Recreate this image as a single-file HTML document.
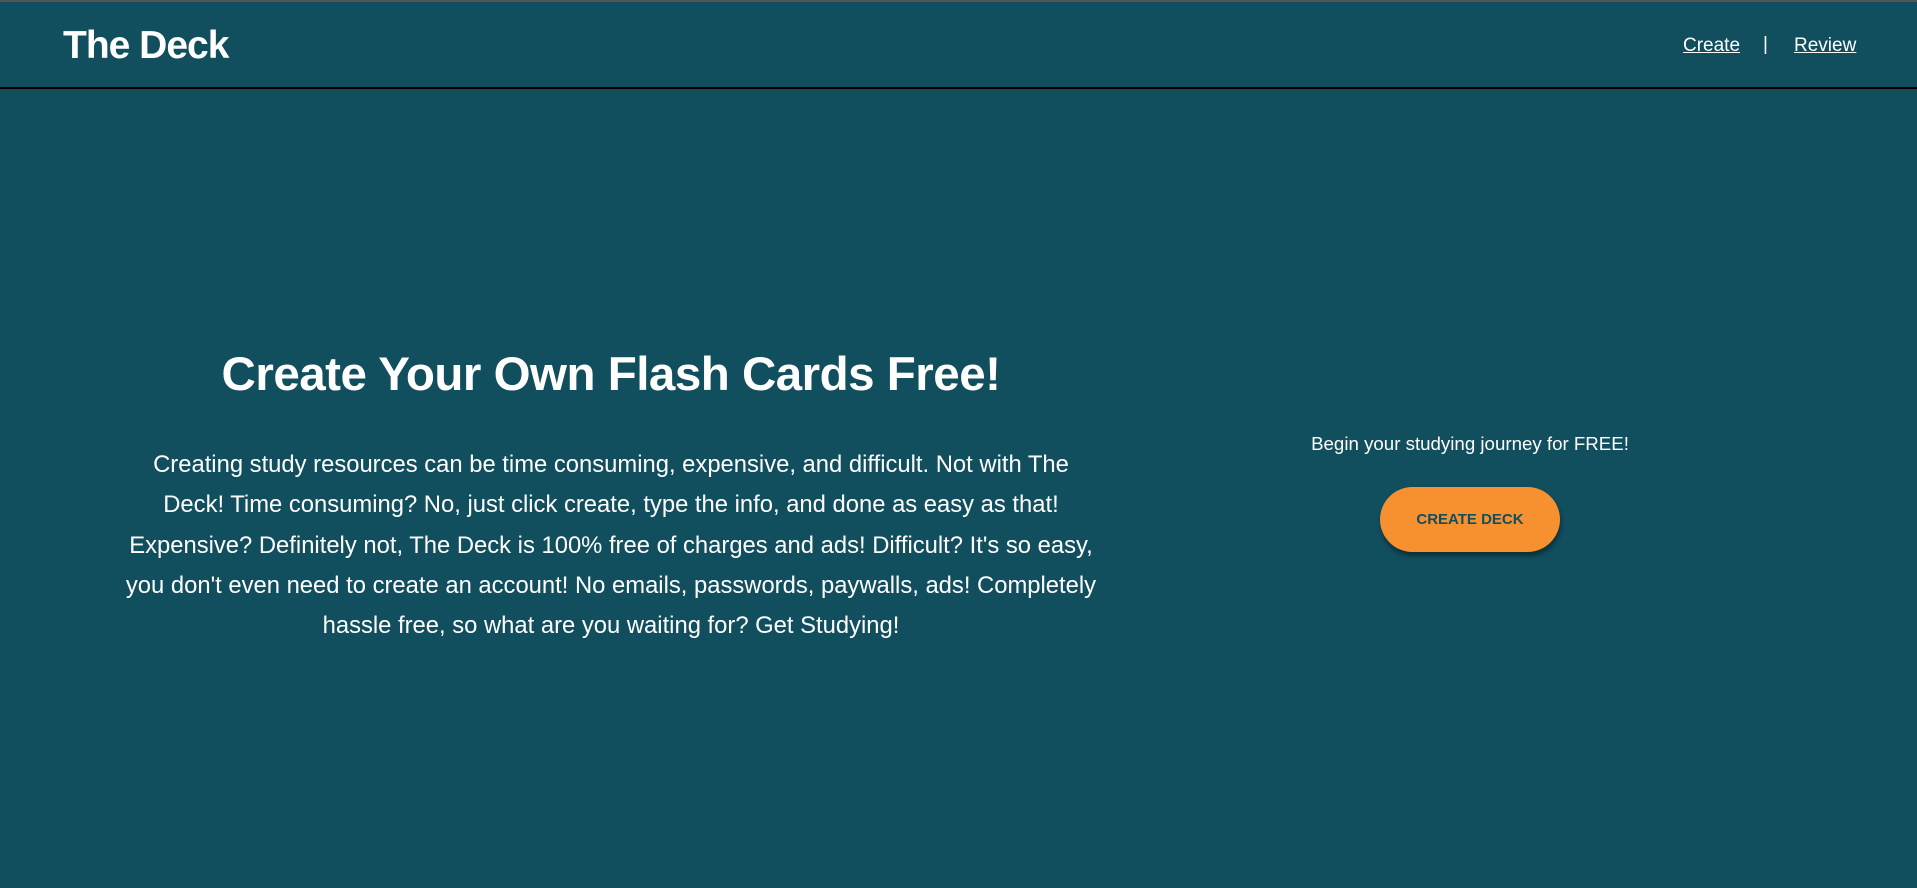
<!DOCTYPE html>
<html><head><meta charset="utf-8"><style>
html,body{margin:0;padding:0}
body{width:1917px;height:888px;background:#114e5e;position:relative;overflow:hidden;font-family:"Liberation Sans",sans-serif;color:#fff}
.top{position:absolute;left:0;top:0;width:100%;height:2px;background:#555}
.hdr{position:absolute;left:0;top:2px;width:100%;height:85px;border-bottom:2px solid #000}
.logo{position:absolute;left:63px;top:22px;font-size:39px;font-weight:bold;letter-spacing:-1px}
.nav{position:absolute;top:33px;font-size:19px;color:#fff;text-decoration:underline}
.sep{position:absolute;left:1763px;top:32px;font-size:19px}
h1{position:absolute;left:0;width:1222px;top:347px;margin:0;text-align:center;font-size:47.5px;font-weight:bold;letter-spacing:-0.5px}
p{position:absolute;left:60px;width:1102px;top:445px;margin:0;text-align:center;font-size:23.8px;line-height:40.3px}
.begin{position:absolute;left:1270px;width:400px;top:433px;text-align:center;font-size:18.7px}
.btn{position:absolute;left:1380px;top:487px;width:180px;height:65px;border-radius:33px;background:#f7912f;color:#114e5e;font-weight:bold;font-size:15px;text-align:center;line-height:65px;box-shadow:1px 4px 5px rgba(0,0,0,.4)}
</style></head><body>
<div class="top"></div>
<div class="hdr">
<div class="logo">The Deck</div>
<span class="nav" style="left:1683px">Create</span>
<span class="sep">|</span>
<span class="nav" style="left:1794px">Review</span>
</div>
<h1>Create Your Own Flash Cards Free!</h1>
<p>Creating study resources can be time consuming, expensive, and difficult. Not with The<br>Deck! Time consuming? No, just click create, type the info, and done as easy as that!<br>Expensive? Definitely not, The Deck is 100% free of charges and ads! Difficult? It's so easy,<br>you don't even need to create an account! No emails, passwords, paywalls, ads! Completely<br>hassle free, so what are you waiting for? Get Studying!</p>
<div class="begin">Begin your studying journey for FREE!</div>
<div class="btn">CREATE DECK</div>
</body></html>
